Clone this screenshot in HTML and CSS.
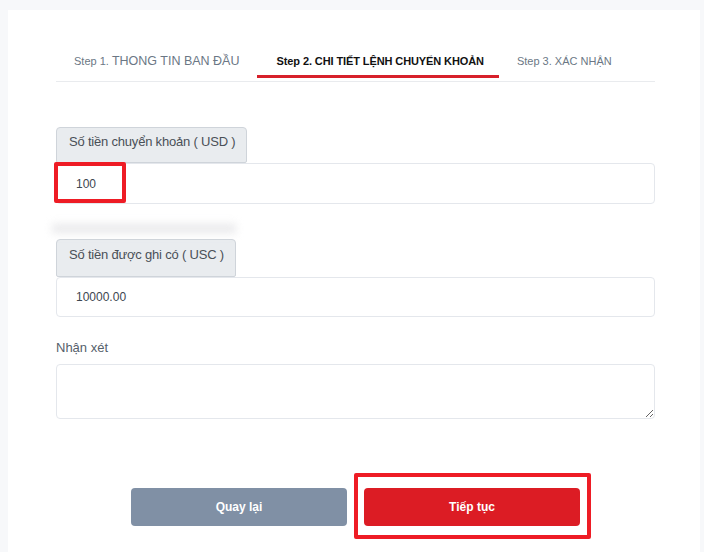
FILE: index.html
```html
<!DOCTYPE html>
<html lang="vi">
<head>
  <meta charset="UTF-8" />
  <meta name="viewport" content="width=device-width, initial-scale=1.0" />
  <title>Chuyển khoản</title>
  <link rel="stylesheet" href="styles.css">
</head>
<body>
  <div class="card">
    <div class="tabs">
      <div class="tab"><span class="step">Step 1.</span> <span class="big">THONG TIN BAN ĐẦU</span></div>
      <div class="tab active">Step 2. CHI TIẾT LỆNH CHUYỂN KHOẢN</div>
      <div class="tab">Step 3. XÁC NHẬN</div>
    </div>

    <div class="group first">
      <div class="addon">Số tiền chuyển khoản ( USD )</div>
      <div class="field">
        <input class="input" type="text" value="100">
        <div class="mark mark-input"></div>
      </div>
    </div>

    <div class="blurred"></div>

    <div class="group">
      <div class="addon addon-2">Số tiền được ghi có ( USC )</div>
      <div class="field">
        <input class="input input-2" type="text" value="10000.00">
      </div>
    </div>

    <label class="note-label">Nhận xét</label>
    <textarea class="note"></textarea>

    <div class="actions">
      <button class="btn back">Quay lại</button>
      <div class="field">
        <button class="btn next">Tiếp tục</button>
        <div class="mark mark-btn"></div>
      </div>
    </div>
  </div>
</body>
</html>
```

FILE: styles.css
```css
body {
  margin: 0;
  background-color: #f7f8fa;
  font-family: "Liberation Sans", Arial, sans-serif;
  color: #495057;
}
.card {
  background: #fff;
  margin: 10px 4px 0 8px;
  padding: 30px 45px 0 48px;
  height: 542px;
  box-sizing: border-box;
}
.tabs {
  display: flex;
  padding-bottom: 3px;
  border-bottom: 1px solid #e9ebee;
}
.tab {
  padding: 13px 18px 6px;
  font-size: 11px;
  line-height: 16px;
  color: #6b7785;
  border-bottom: 3px solid transparent;
  white-space: nowrap;
}
.tab .big {
  font-size: 12.5px;
}
.tab.active {
  color: #111;
  font-weight: bold;
  border-bottom-color: #d7202a;
  padding-right: 15px;
  padding-left: 19px;
  letter-spacing: -0.1px;
}
.group {
  display: flex;
  flex-direction: column;
  align-items: flex-start;
}
.group.first {
  margin-top: 45px;
}
.addon {
  box-sizing: border-box;
  height: 36px;
  padding: 4px 11px 0 12px;
  font-size: 13px;
  line-height: 20px;
  letter-spacing: -0.2px;
  white-space: nowrap;
  background: #e9ecef;
  border: 1px solid #cfd4da;
  border-radius: 4px 4px 2px 2px;
}
.addon-2 {
  height: 38px;
  padding-top: 5px;
}
.field {
  position: relative;
  align-self: stretch;
}
.input {
  display: block;
  box-sizing: border-box;
  width: 100%;
  height: 41px;
  padding: 0 19px;
  font-family: inherit;
  font-size: 12px;
  color: #3d4650;
  border: 1px solid #e4e7ec;
  border-radius: 4px;
  outline: none;
}
.input-2 {
  height: 40px;
}
.mark {
  position: absolute;
  border: 4px solid #ee1c25;
  border-radius: 2px;
  pointer-events: none;
}
.mark-input {
  left: -2px;
  top: -1px;
  width: 64px;
  height: 33px;
}
.blurred {
  width: 184px;
  height: 9px;
  margin: 20px 0 6px -4px;
  background: #d6d6da;
  filter: blur(4px);
  opacity: 0.55;
}
.note-label {
  display: block;
  margin-top: 22px;
  font-size: 13px;
  line-height: 18px;
  color: #55606b;
}
.note {
  display: block;
  box-sizing: border-box;
  width: 100%;
  height: 55px;
  margin-top: 7px;
  border: 1px solid #e4e7ec;
  border-radius: 4px;
  resize: vertical;
}
.actions {
  display: flex;
  justify-content: center;
  gap: 17px;
  margin-top: 69px;
}
.actions .field {
  align-self: auto;
}
.btn {
  display: block;
  width: 216px;
  height: 38px;
  border: none;
  border-radius: 4px;
  color: #fff;
  font-family: inherit;
  font-size: 12px;
  font-weight: bold;
  cursor: pointer;
}
.back {
  background-color: #8090a5;
}
.next {
  background-color: #dc1c24;
}
.mark-btn {
  left: -10px;
  top: -15px;
  right: -11px;
  bottom: -13px;
}
```
